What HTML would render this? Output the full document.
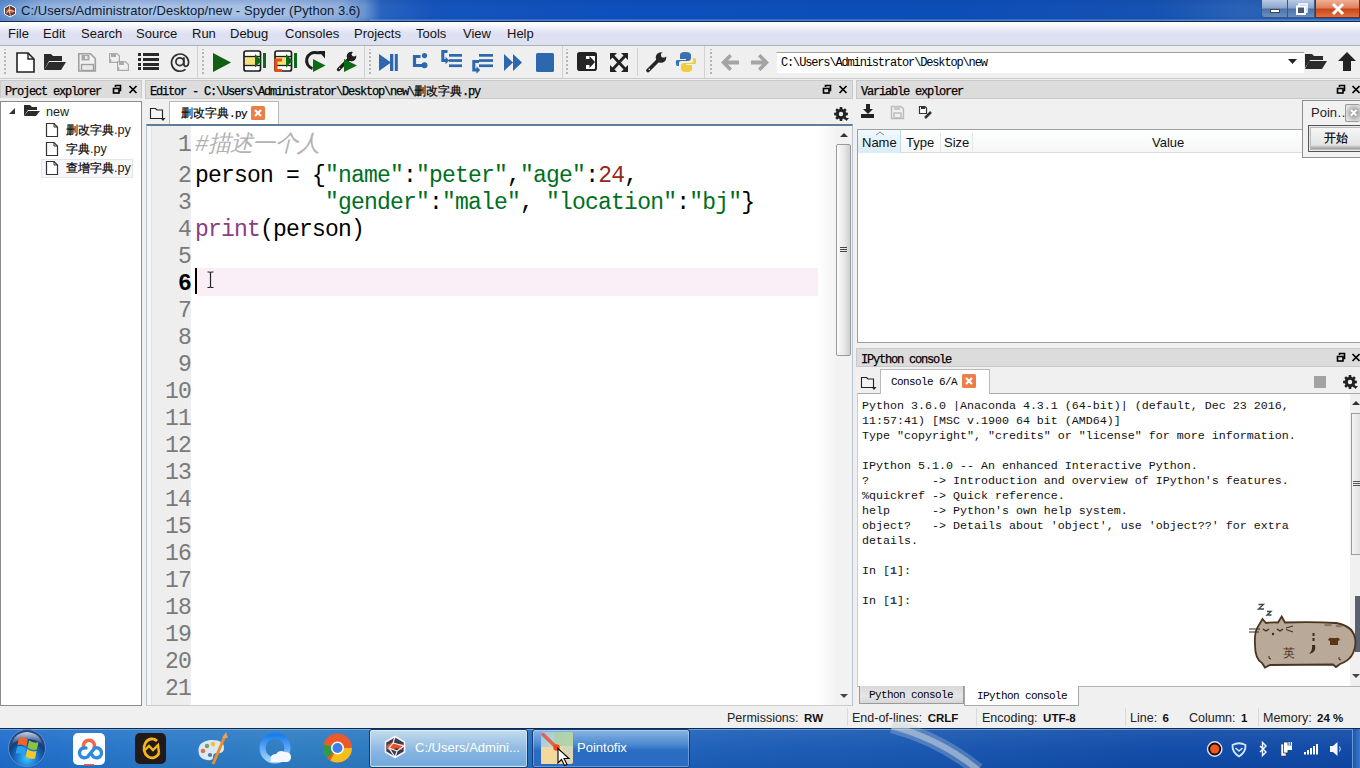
<!DOCTYPE html>
<html><head><meta charset="utf-8">
<style>
*{margin:0;padding:0;box-sizing:border-box}
html,body{width:1360px;height:768px;overflow:hidden;background:#f0f0f0;font-family:"Liberation Sans",sans-serif;position:relative}
.a{position:absolute}
#title{left:0;top:0;width:1360px;height:21px;background:linear-gradient(rgba(20,60,140,0.18),rgba(255,255,255,0) 30%,rgba(255,255,255,0) 70%,rgba(20,60,140,0.15)),linear-gradient(90deg,#5f8fd0 0%,#90b2de 3%,#a9c2e6 10%,#a6c0e6 20%,#90b0de 25%,#6a94d0 26.8%,#2a64c0 28%,#1454bc 32%,#0d4fbc 45%,#0c4eb8 70%,#1552b2 85%,#2a62b6 91%,#1e58b0 100%)}
#title .t{left:21px;top:3px;font-size:13px;color:#0e1a2e;white-space:nowrap;letter-spacing:0.05px}
#tline{left:0;top:21px;width:1360px;height:1px;background:#1a2a45}
#menu{left:0;top:22px;width:1360px;height:23px;background:linear-gradient(#ffffff 0%,#fafbfd 12%,#ebeaf8 32%,#dfe1f3 50%,#dde1ef 100%)}
#menu span{position:absolute;top:4px;font-size:13px;color:#141414}
#tb{left:0;top:45px;width:1360px;height:34px;background:#efefef;border-top:1px solid #adb1bc;border-bottom:1px solid #c9c9c9}
.grip{position:absolute;top:6px;width:2px;height:22px;background:repeating-linear-gradient(#b9b9b9 0 2px,transparent 2px 4px)}
.sep{position:absolute;top:2px;width:1px;height:30px;background:#d4d4d4;border-right:1px solid #fbfbfb}
.dockt{position:absolute;height:19px;background:#dcdcdc;border:1px solid #c9c9c9;font-family:"Liberation Mono",monospace;font-size:12px;letter-spacing:-1.2px;color:#000;-webkit-text-stroke:0.25px #000;padding:5px 0 0 4px;white-space:nowrap;line-height:13px}
.dockt .cj{font-size:12px;letter-spacing:0}
.mono{font-family:"Liberation Mono",monospace}
svg{position:absolute;overflow:visible}
.pe{font-size:12.6px;color:#1a1a1a;white-space:nowrap;line-height:15px}
.pe .cj{font-size:12px;color:#000;-webkit-text-stroke:0.2px #000}
.code{left:0;top:0}
.ln{position:absolute;left:147px;width:44px;text-align:right;font-family:"Liberation Mono",monospace;font-size:23px;letter-spacing:-0.8px;line-height:27px;color:#7a7a7a;padding-right:0px}
.ln.cur{color:#000;font-weight:bold}
.cl{position:absolute;left:195px;font-family:"Liberation Mono",monospace;font-size:23px;letter-spacing:-0.8px;line-height:27px;color:#000;white-space:pre}
.cm{color:#b2b2b2;font-style:italic}
.st{color:#006e1e}
.nu{color:#902a1c}
.kw{color:#8a3d82}
.vh{font-size:13px;color:#111}
.con{font-family:"Liberation Mono",monospace;font-size:11.67px;line-height:15px;color:#111}
.con b{color:#2a3a7a}
.bt{font-size:11px;letter-spacing:-0.6px;color:#000;line-height:13px}
.sb{top:711px;font-size:12.5px;color:#222;white-space:nowrap;line-height:15px}
.sb b{color:#111;font-size:11.5px;margin-left:2px}
.tk{top:740px;font-size:13px;color:#fff;white-space:nowrap}

</style></head><body>
<!-- Title bar -->
<div id="title" class="a">
 <svg style="left:3px;top:4px" width="14" height="14" viewBox="0 0 14 14"><path d="M7 1 L12.5 4 V10 L7 13 L1.5 10 V4 Z" fill="#5a3a3a" stroke="#f4f4f8" stroke-width="1"/><path d="M3 6 L7 4.5 L11 6.5 L10 9 L6 8.5 L3.5 9 Z" fill="#e05a2a"/><g stroke="#fff" stroke-width="0.7" fill="none"><path d="M7 1.5 L6 6 L3 9.5 M6 6 L11.5 7.5 M6 6 L7.5 12.5"/></g></svg>
 <div class="a" style="left:1261px;top:0;width:27px;height:18px;background:linear-gradient(#b9cbe6,#8aa6cc 45%,#4d73a8 55%,#6a90c0);border:1px solid #3a5580;border-top:none;border-radius:0 0 0 4px"></div>
 <div class="a" style="left:1288px;top:0;width:27px;height:18px;background:linear-gradient(#b9cbe6,#8aa6cc 45%,#4d73a8 55%,#6a90c0);border:1px solid #3a5580;border-top:none;border-left:none"></div>
 <div class="a" style="left:1315px;top:0;width:45px;height:18px;background:linear-gradient(#f0b090,#e08060 45%,#c84818 55%,#e07040);border:1px solid #6a3020;border-top:none"></div>
 <div class="a" style="left:1270px;top:9px;width:10px;height:4px;background:#fff;border:1px solid #445"></div>
 <svg style="left:1295px;top:3px" width="14" height="12"><rect x="4" y="1" width="8" height="8" fill="none" stroke="#fff" stroke-width="1.5"/><rect x="2" y="3.5" width="8" height="7.5" fill="#465a78" stroke="#fff" stroke-width="2"/></svg>
 <svg style="left:1331px;top:3px" width="14" height="12"><path d="M2 1 L12 11 M12 1 L2 11" stroke="#fff" stroke-width="3"/></svg>
 <div class="a t">C:/Users/Administrator/Desktop/new - Spyder (Python 3.6)</div>
</div>
<div class="a" style="left:370px;top:19px;width:990px;height:2px;background:linear-gradient(rgba(120,170,240,0.2),rgba(110,165,235,0.7))"></div>
<div id="tline" class="a"></div>
<div id="menu" class="a">
 <span style="left:8px">File</span><span style="left:43px">Edit</span><span style="left:81px">Search</span><span style="left:136px">Source</span><span style="left:192px">Run</span><span style="left:230px">Debug</span><span style="left:285px">Consoles</span><span style="left:354px">Projects</span><span style="left:416px">Tools</span><span style="left:463px">View</span><span style="left:507px">Help</span>
</div>
<div id="tb" class="a"></div>
<svg style="left:0;top:0" width="1360" height="80" viewBox="0 0 1360 80">
 <!-- grips -->
 <g fill="#bdbdbd">
  <rect x="4" y="49" width="2" height="26" fill="url(#gp)"/>
  <rect x="202" y="49" width="2" height="26" fill="url(#gp)"/>
  <rect x="369" y="49" width="2" height="26" fill="url(#gp)"/>
  <rect x="566" y="49" width="2" height="26" fill="url(#gp)"/>
  <rect x="710" y="49" width="2" height="26" fill="url(#gp)"/>
 </g>
 <defs><pattern id="gp" width="2" height="4" patternUnits="userSpaceOnUse"><rect width="2" height="2" fill="#b5b5b5"/></pattern></defs>
 <g fill="#d2d2d2"><rect x="197" y="46" width="1" height="32"/><rect x="364" y="46" width="1" height="32"/><rect x="562" y="46" width="1" height="32"/><rect x="637" y="48" width="1" height="28"/><rect x="704" y="46" width="1" height="32"/></g>
 <!-- new file -->
 <path d="M17 53 H28 L34 59 V72 H17 Z" fill="#fff" stroke="#222" stroke-width="1.6"/>
 <path d="M28 53 V59 H34" fill="none" stroke="#222" stroke-width="1.4"/>
 <!-- open folder -->
 <path d="M44 54 H51 L53 56 H62 V61 H49 L44 70 Z" fill="#2b2b2b"/>
 <path d="M49 62 H66 L61 70 H44 Z" fill="#2b2b2b"/>
 <!-- save (grey) -->
 <path d="M78.8 53.8 H90.5 L95.3 58.6 V71 H78.8 Z" fill="#f2f2f2" stroke="#a0a0a0" stroke-width="1.6"/>
 <rect x="81.5" y="55" width="8" height="5.5" fill="#a8a8a8"/><rect x="85" y="56" width="2.5" height="3" fill="#e8e8e8"/>
 <rect x="81.5" y="64.5" width="12" height="6" fill="#eaeaea" stroke="#a0a0a0" stroke-width="1.4"/>
 <!-- save all -->
 <g fill="#f0f0f0" stroke="#aaaaaa" stroke-width="1.2">
  <path d="M109.6 53.6 H117 L119.4 56 V62.4 H109.6 Z"/>
  <path d="M117.6 61.6 H125.5 L128.4 64.5 V70.4 H117.6 Z"/>
 </g>
 <g fill="#aaaaaa"><rect x="111" y="53.5" width="5" height="3.5"/><rect x="119" y="61.5" width="5" height="3.5"/><rect x="110" y="59" width="1.2" height="3"/><rect x="118" y="67" width="1.2" height="3"/></g>
 <!-- list -->
 <g fill="#2a2a2a"><rect x="138" y="53" width="3" height="3"/><rect x="143" y="53" width="16" height="3"/><rect x="138" y="58" width="3" height="3"/><rect x="143" y="58" width="16" height="3"/><rect x="138" y="63" width="3" height="3"/><rect x="143" y="63" width="16" height="3"/><rect x="138" y="67" width="3" height="3"/><rect x="143" y="67" width="16" height="3"/></g>
 <!-- @ -->
 <g fill="none" stroke="#2e2e2e" stroke-width="1.7"><path d="M185.5 69.3 A8.6 8.6 0 1 1 188.6 61.5 Q188.6 66.3 185.8 66.3 Q183.9 66.3 183.9 64 V57.3"/><circle cx="179.8" cy="61.7" r="3.9"/></g>
 <!-- run -->
 <path d="M213 53 L231 62.5 L213 72 Z" fill="#116011"/>
 <!-- run cell -->
 <rect x="244" y="51" width="16.5" height="20" rx="2" fill="#fff" stroke="#1e1e1e" stroke-width="1.7"/>
 <rect x="245" y="57" width="11" height="8" fill="#f5e27a"/>
 <line x1="244" y1="56.5" x2="260" y2="56.5" stroke="#1e1e1e" stroke-width="1.3"/><line x1="244" y1="65.5" x2="260" y2="65.5" stroke="#1e1e1e" stroke-width="1.3"/>
 <path d="M255 54 L261.5 60.8 L255 67.5 Z" fill="#0d6a14"/><rect x="263" y="53" width="3" height="15" fill="#0d6a14"/>
 <!-- run cell advance -->
 <rect x="275" y="51" width="16.5" height="20" rx="2" fill="#fff" stroke="#1e1e1e" stroke-width="1.7"/>
 <rect x="276" y="57" width="11" height="8" fill="#f5e27a"/>
 <line x1="275" y1="56.5" x2="291" y2="56.5" stroke="#1e1e1e" stroke-width="1.3"/><line x1="275" y1="65.5" x2="291" y2="65.5" stroke="#1e1e1e" stroke-width="1.3"/>
 <path d="M286 54 L292.5 60.8 L286 67.5 Z" fill="#0d6a14"/><rect x="294" y="53" width="3" height="15" fill="#0d6a14"/>
 <path d="M282 60 H276 V70.5 H282" fill="none" stroke="#f04a10" stroke-width="3"/>
 <!-- rerun -->
 <path d="M312.5 68.5 A7.8 7.8 0 0 1 317 52.8 H321" fill="none" stroke="#1e1e1e" stroke-width="3"/>
 <path d="M318.5 51 H325 V58.5 Z" fill="#1e1e1e"/>
 <path d="M313 59 L325.5 65.5 L313 72 Z" fill="#0d6a14"/>
 <!-- configure run -->
 <path d="M338.5 69.5 L349 59" stroke="#1e1e1e" stroke-width="3.4" stroke-linecap="round"/><circle cx="339.5" cy="68.5" r="0.7" fill="#ddd"/>
 <circle cx="351.5" cy="56.5" r="4.8" fill="#1e1e1e"/>
 <circle cx="354" cy="54.2" r="2.3" fill="#efefef"/><path d="M353 52 L356 49 L358.5 51.5 L355.5 54.5 Z" fill="#efefef"/>
 <path d="M344 59 L357 65.5 L344 72 Z" fill="#0d6a14"/>
 <!-- debug -->
 <path d="M379 54 L391 62.5 L379 71 Z" fill="#2d67ad"/><rect x="390" y="54" width="3.3" height="17" fill="#2d67ad"/><rect x="394.8" y="54" width="3" height="17" fill="#2d67ad"/>
 <!-- step -->
 <path d="M420.5 56.5 H414.5 V65.5 H422" fill="none" stroke="#2d67ad" stroke-width="3.2"/>
 <circle cx="424.5" cy="55.6" r="2.6" fill="#2d67ad"/><circle cx="424.5" cy="65.3" r="3" fill="#2d67ad"/>
 <!-- step into -->
 <path d="M447.5 51.5 H442.8 V60.5 H446" fill="none" stroke="#2d67ad" stroke-width="3"/><path d="M445.5 56.8 L449.3 60.5 L445.5 64.2 Z" fill="#2d67ad"/>
 <g fill="#2d67ad"><rect x="449" y="54" width="13" height="2.7"/><rect x="449" y="59.2" width="13" height="2.7"/><rect x="449" y="64.4" width="13" height="2.7"/></g>
 <!-- step return -->
 <g fill="#2d67ad"><rect x="479" y="54" width="14" height="2.7"/><rect x="479" y="59.2" width="14" height="2.7"/><rect x="479" y="64.4" width="14" height="2.7"/></g>
 <path d="M479 61.5 H473.8 V70 H477" fill="none" stroke="#2d67ad" stroke-width="3"/><path d="M476.5 66.3 L480.2 70 L476.5 73.7 Z" fill="#2d67ad"/>
 <!-- continue -->
 <path d="M504 54 L513 62.5 L504 71 Z M513 54 L522 62.5 L513 71 Z" fill="#2d67ad"/>
 <!-- stop -->
 <rect x="536" y="53" width="18" height="19" rx="1.5" fill="#2d67ad"/>
 <!-- maximize pane -->
 <rect x="578" y="53" width="18" height="17" rx="1.8" fill="#fff" stroke="#222" stroke-width="2"/>
 <rect x="578" y="53" width="18" height="3" fill="#222"/>
 <path d="M579 56 H586 V59 H589.5 V56 L595 62 L589.5 68 V65 H586 V69 H579 Z" fill="#262626"/>
 <!-- fullscreen -->
 <g stroke="#222" stroke-width="2.8"><line x1="613" y1="56" x2="625" y2="69"/><line x1="625" y1="56" x2="613" y2="69"/></g>
 <g fill="#222"><path d="M610 53 H617 L610 60 Z"/><path d="M628 53 H621 L628 60 Z"/><path d="M610 72 H617 L610 65 Z"/><path d="M628 72 H621 L628 65 Z"/></g>
 <!-- wrench -->
 <path d="M648 70.5 L658 60.5" stroke="#262626" stroke-width="3.8" stroke-linecap="round"/><circle cx="649.3" cy="69.3" r="0.8" fill="#eee"/>
 <circle cx="661" cy="57.5" r="5.3" fill="#262626"/>
 <circle cx="663.6" cy="54.9" r="2.6" fill="#eeeeee"/><path d="M662.5 52.5 L666 49 L669 52 L665.5 55.5 Z" fill="#eeeeee"/>
 <!-- python -->
 <path d="M686 52 C680 52 680 54 680 56 V59 H686 V60 H677 C675 60 676 66 677 66 H679 V63 C679 61 681 61 682 61 H688 C690 61 691 60 691 58 V55 C691 53 689 52 686 52 Z" fill="#3a72b0"/>
 <path d="M686 72 C692 72 692 70 692 68 V65 H686 V64 H695 C697 64 696 58 695 58 H693 V61 C693 63 691 63 690 63 H684 C682 63 681 64 681 66 V69 C681 71 683 72 686 72 Z" fill="#f3cc3b"/>
 <!-- back / forward -->
 <path d="M721 62.5 L729.5 54 L732 56.5 L728 60.5 H739 V64.5 H728 L732 68.5 L729.5 71 Z" fill="#a4a4a4"/>
 <path d="M769 62.5 L760.5 54 L758 56.5 L762 60.5 H751 V64.5 H762 L758 68.5 L760.5 71 Z" fill="#a4a4a4"/>
 <!-- open dir -->
 <path d="M1305 54 H1312 L1314 56 H1323 V60 H1310 L1305 68 Z" fill="#2b2b2b"/>
 <path d="M1309 61 H1327 L1322 69 H1305 Z" fill="#2b2b2b"/>
 <!-- up -->
 <path d="M1347 52 L1356 61 H1351 V71 H1343 V61 H1338 Z" fill="#222"/>
</svg>
<div class="a" style="left:776px;top:52px;width:528px;height:21px;background:#fff;border-top:1px solid #a0a0a0;border-left:1px solid #f0f0f0"></div>
<div class="a mono" style="left:781px;top:56px;font-size:12px;letter-spacing:-1.15px;color:#000;line-height:14px">C:\Users\Administrator\Desktop\new</div>
<svg style="left:1288px;top:59px" width="9" height="5"><path d="M0 0 H9 L4.5 5 Z" fill="#222"/></svg>

<!-- dock title bars -->
<div class="dockt" style="left:0;top:80px;width:142px">Project explorer</div>
<div class="dockt" style="left:145px;top:80px;width:708px">Editor - C:\Users\Administrator\Desktop\new\<span class="cj">删改字典</span>.py</div>
<div class="dockt" style="left:856px;top:80px;width:504px;border-right:none">Variable explorer</div>
<div class="dockt" style="left:856px;top:348px;width:504px;border-right:none">IPython console</div>

<svg style="left:0;top:0" width="1360" height="370">
 <g fill="none" stroke="#000" stroke-width="1.6">
  <path d="M115.5 87 V85.5 H120.5 V90.5 H119"/><rect x="113.5" y="88.5" width="5.5" height="4.5"/>
  <path d="M825.5 87 V85.5 H830.5 V90.5 H829"/><rect x="823.5" y="88.5" width="5.5" height="4.5"/>
  <path d="M1339.5 87 V85.5 H1344.5 V90.5 H1343"/><rect x="1337.5" y="88.5" width="5.5" height="4.5"/>
  <path d="M1339.5 355 V353.5 H1344.5 V358.5 H1343"/><rect x="1337.5" y="356.5" width="5.5" height="4.5"/>
 </g>
 <g stroke="#000" stroke-width="1.7">
  <path d="M129.5 86 L136.5 93 M136.5 86 L129.5 93"/>
  <path d="M839.5 86 L846.5 93 M846.5 86 L839.5 93"/>
  <path d="M1352.5 86 L1359.5 93 M1359.5 86 L1352.5 93"/>
  <path d="M1352.5 354 L1359.5 361 M1359.5 354 L1352.5 361"/>
 </g>
</svg>

<!-- ===== Project explorer ===== -->
<div class="a" style="left:0;top:98px;width:145px;height:607px;background:#f0f0f0"></div>
<div class="a" style="left:0;top:101px;width:142px;height:605px;background:#fff;border:1px solid #8c8c8c"></div>
<div class="a" style="left:41px;top:159px;width:92px;height:19px;border:1px solid #e4e4ee;background:#f7f7fb"></div>
<svg style="left:0;top:0" width="145" height="200">
 <path d="M9 114 L15 108 V114 Z" fill="#333"/>
 <path d="M24 105 H30 L32 107 H37 V110 H28 L24 116 Z" fill="#2b2b2b"/><path d="M28 111 H40 L36 116 H24 Z" fill="#2b2b2b"/>
 <g fill="#fff" stroke="#333" stroke-width="1.2">
  <path d="M46.5 123.5 H54 L57.5 127 V136.5 H46.5 Z"/><path d="M46.5 142.5 H54 L57.5 146 V155.5 H46.5 Z"/><path d="M46.5 161.5 H54 L57.5 165 V174.5 H46.5 Z"/>
 </g>
 <g fill="none" stroke="#333" stroke-width="1"><path d="M54 123.5 V127 H57.5"/><path d="M54 142.5 V146 H57.5"/><path d="M54 161.5 V165 H57.5"/></g>
</svg>
<div class="a pe" style="left:46px;top:105px">new</div>
<div class="a pe" style="left:66px;top:123px"><span class="cj">删改字典</span>.py</div>
<div class="a pe" style="left:66px;top:142px"><span class="cj">字典</span>.py</div>
<div class="a pe" style="left:66px;top:161px"><span class="cj">查增字典</span>.py</div>

<!-- ===== Editor ===== -->
<div class="a" style="left:146px;top:124px;width:707px;height:582px;background:#fff;border:1px solid #b8c4d0;border-bottom:1px solid #cdcdcd;border-top:2px solid #5f7c98"></div>
<div class="a" style="left:147px;top:126px;width:44px;height:579px;background:#eeeeee;border-left:4px solid #f4f6f8"></div><div class="a" style="left:151px;top:126px;width:1px;height:579px;background:#dfe3e8"></div>
<div class="a" style="left:197px;top:268px;width:621px;height:28px;background:#fbeff7"></div>
<div class="a" style="left:169px;top:101px;width:110px;height:23px;background:#fff;border:1px solid #b9b9b9;border-bottom:none"></div>
<div class="a" style="left:181px;top:106px;font-size:12px;line-height:14px;color:#000;white-space:nowrap"><span style="-webkit-text-stroke:0.2px #000">删改字典</span><span class="mono" style="font-size:11px;letter-spacing:-0.6px;-webkit-text-stroke:0.2px #000">.py</span></div>
<svg style="left:150px;top:107px" width="18" height="16"><path d="M0.5 1.5 H5.5 L7 3 H12.5 V11.5 H0.5 Z" fill="#f4f4f4" stroke="#222" stroke-width="1.1"/><path d="M10.5 11 H15.5 L13 14 Z" fill="#222"/></svg>
<svg style="left:251px;top:106px" width="14" height="14"><rect width="14" height="14" rx="1.5" fill="#ec7e47"/><path d="M4 4 L10 10 M10 4 L4 10" stroke="#fff" stroke-width="2.2"/></svg>
<svg style="left:834px;top:107px" width="18" height="18"><path fill-rule="evenodd" fill="#222" d="M12.0 5.5 L13.9 5.8 L13.9 8.2 L12.0 8.5 L11.6 9.5 L12.7 11.0 L11.0 12.7 L9.5 11.6 L8.5 12.0 L8.2 13.9 L5.8 13.9 L5.5 12.0 L4.5 11.6 L3.0 12.7 L1.3 11.0 L2.4 9.5 L2.0 8.5 L0.1 8.2 L0.1 5.8 L2.0 5.5 L2.4 4.5 L1.3 3.0 L3.0 1.3 L4.5 2.4 L5.5 2.0 L5.8 0.1 L8.2 0.1 L8.5 2.0 L9.5 2.4 L11.0 1.3 L12.7 3.0 L11.6 4.5 Z M9.2 7 A2.2 2.2 0 1 0 4.8 7 A2.2 2.2 0 1 0 9.2 7 Z"/><path d="M10 11 H15 L12.5 14 Z" fill="#222"/></svg>
<!-- scrollbar -->
<div class="a" style="left:818px;top:126px;width:18px;height:579px;background:linear-gradient(90deg,#ffffff,#f9f9f9 50%,#f3f3f3)"></div><div class="a" style="left:836px;top:126px;width:16px;height:579px;background:#f2f2f2"></div>
<div class="a" style="left:836px;top:144px;width:15px;height:212px;background:linear-gradient(90deg,#fbfbfb,#e8e8e8 55%,#cdcdcd);border:1px solid #9a9a9a;border-radius:2px"></div>
<svg style="left:839px;top:132px" width="10" height="6"><path d="M1 5 L5 1 L9 5 Z" fill="#333"/></svg>
<svg style="left:839px;top:693px" width="10" height="6"><path d="M1 1 L5 5 L9 1 Z" fill="#444"/></svg>
<svg style="left:840px;top:246px" width="8" height="8"><g stroke="#444" stroke-width="1"><line x1="0" y1="1.5" x2="7" y2="1.5"/><line x1="0" y1="3.5" x2="7" y2="3.5"/><line x1="0" y1="5.5" x2="7" y2="5.5"/></g></svg>
<!-- code -->
<div class="a code" id="code">
<div class="ln" style="top:132px">1</div><div class="cl" style="top:132px"><span class="cm">#描述一个人</span></div>
<div class="ln" style="top:163px">2</div><div class="cl" style="top:163px">person = {<span class="st">"name"</span>:<span class="st">"peter"</span>,<span class="st">"age"</span>:<span class="nu">24</span>,</div>
<div class="ln" style="top:190px">3</div><div class="cl" style="top:190px">          <span class="st">"gender"</span>:<span class="st">"male"</span>, <span class="st">"location"</span>:<span class="st">"bj"</span>}</div>
<div class="ln" style="top:217px">4</div><div class="cl" style="top:217px"><span class="kw">print</span>(person)</div>
<div class="ln" style="top:244px">5</div>
<div class="ln cur" style="top:271px">6</div>
<div class="ln" style="top:298px">7</div>
<div class="ln" style="top:325px">8</div>
<div class="ln" style="top:352px">9</div>
<div class="ln" style="top:379px">10</div>
<div class="ln" style="top:406px">11</div>
<div class="ln" style="top:433px">12</div>
<div class="ln" style="top:460px">13</div>
<div class="ln" style="top:487px">14</div>
<div class="ln" style="top:514px">15</div>
<div class="ln" style="top:541px">16</div>
<div class="ln" style="top:568px">17</div>
<div class="ln" style="top:595px">18</div>
<div class="ln" style="top:622px">19</div>
<div class="ln" style="top:649px">20</div>
<div class="ln" style="top:676px">21</div>
</div>
<div class="a" style="left:195px;top:268px;width:2px;height:26px;background:#000"></div>
<svg style="left:206px;top:271px" width="10" height="18"><path d="M1.5 1 H3.5 Q4.5 1 4.5 2.5 V15 Q4.5 16.5 3.5 16.5 H1.5 M7.5 1 H5.5 Q4.5 1 4.5 2.5 V15 Q4.5 16.5 5.5 16.5 H7.5" fill="none" stroke="#222" stroke-width="1.2"/></svg>

<!-- ===== Variable explorer ===== -->
<svg style="left:0;top:0" width="1360" height="130">
 <g fill="#222"><rect x="866" y="104" width="4" height="6"/><path d="M863 109 H873 L868 114 Z"/><rect x="861" y="114" width="13" height="4"/></g>
 <g fill="none" stroke="#b9b9b9" stroke-width="1.4"><path d="M891.5 106.5 H901 L903.5 109 V118.5 H891.5 Z"/><rect x="894" y="113" width="7" height="5"/></g><rect x="894" y="106" width="6" height="4" fill="#c8c8c8"/>
 <g><path d="M919.5 106.5 H925 L926.5 108 V113.5 H919.5 Z" fill="#fff" stroke="#333" stroke-width="1.2"/><rect x="921" y="106" width="4" height="3" fill="#333"/><path d="M925 118 L931 112" stroke="#333" stroke-width="2.5"/></g>
</svg>
<div class="a" style="left:857px;top:129px;width:503px;height:214px;background:#fff;border:1px solid #a0a0a0;border-right:none"></div>
<div class="a" style="left:858px;top:130px;width:502px;height:23px;background:linear-gradient(#ffffff,#f4f6f8);border-bottom:1px solid #dcdcdc"></div>
<div class="a" style="left:858px;top:130px;width:43px;height:23px;background:linear-gradient(#f2f8fd,#d8ecf9);border-right:1px solid #c2d8e8"></div>
<div class="a" style="left:940px;top:133px;width:1px;height:19px;background:#e6e6e6"></div>
<div class="a" style="left:972px;top:133px;width:1px;height:19px;background:#e6e6e6"></div>
<svg style="left:875px;top:131px" width="10" height="5"><path d="M1 4 L5 1 L9 4" fill="none" stroke="#7a8ca0" stroke-width="1"/></svg>
<div class="a vh" style="left:862px;top:135px">Name</div>
<div class="a vh" style="left:906px;top:135px">Type</div>
<div class="a vh" style="left:944px;top:135px">Size</div>
<div class="a vh" style="left:1152px;top:135px">Value</div>

<!-- Pointofix popup -->
<div class="a" style="left:1302px;top:100px;width:58px;height:58px;background:#f2f2f2;border:1px solid #8e8e8e;border-right:none"></div>
<div class="a" style="left:1311px;top:105px;font-size:13px;line-height:15px;color:#222;white-space:nowrap">Poin…</div>
<div class="a" style="left:1345px;top:104px;width:15px;height:18px;background:radial-gradient(circle at 60% 50%,#8a8a8a 0,#b8b8b8 40%,#e4e4e4 80%);border:1px solid #9a9a9a;border-radius:2px;border-right:none"></div>
<svg style="left:1350px;top:109px" width="8" height="8"><path d="M1 1 L6.5 6.5 M6.5 1 L1 6.5" stroke="#fff" stroke-width="1.8"/></svg>
<div class="a" style="left:1308px;top:125px;width:52px;height:27px;border:1px solid #555;border-right:none;background:#e9e9e9"></div>
<div class="a" style="left:1310px;top:127px;width:50px;height:23px;background:linear-gradient(#f6f6f6,#e4e4e4 80%,#9a9a9a);border:1px solid #bbb;border-right:none"></div>
<div class="a" style="left:1324px;top:131px;font-size:12px;line-height:14px;color:#000;-webkit-text-stroke:0.2px #000">开始</div>

<!-- ===== IPython console ===== -->
<div class="a" style="left:857px;top:393px;width:503px;height:293px;background:#fff;border-top:1px solid #a9a9a9;border-left:1px solid #c6cdd6"></div>
<div class="a" style="left:880px;top:369px;width:110px;height:25px;background:#fff;border:1px solid #b9b9b9;border-bottom:none"></div>
<div class="a mono" style="left:891px;top:376px;font-size:11px;letter-spacing:-0.6px;color:#000;line-height:13px">Console 6/A</div>
<svg style="left:861px;top:376px" width="18" height="16"><path d="M0.5 1.5 H5.5 L7 3 H12.5 V11.5 H0.5 Z" fill="#f4f4f4" stroke="#222" stroke-width="1.1"/><path d="M10.5 11 H15.5 L13 14 Z" fill="#222"/></svg>
<svg style="left:962px;top:374px" width="14" height="14"><rect width="14" height="14" rx="1.5" fill="#ec7e47"/><path d="M4 4 L10 10 M10 4 L4 10" stroke="#fff" stroke-width="2.2"/></svg>
<div class="a" style="left:1314px;top:376px;width:12px;height:12px;background:#a3a3a3"></div>
<svg style="left:1343px;top:375px" width="18" height="18"><path fill-rule="evenodd" fill="#222" d="M12.0 5.5 L13.9 5.8 L13.9 8.2 L12.0 8.5 L11.6 9.5 L12.7 11.0 L11.0 12.7 L9.5 11.6 L8.5 12.0 L8.2 13.9 L5.8 13.9 L5.5 12.0 L4.5 11.6 L3.0 12.7 L1.3 11.0 L2.4 9.5 L2.0 8.5 L0.1 8.2 L0.1 5.8 L2.0 5.5 L2.4 4.5 L1.3 3.0 L3.0 1.3 L4.5 2.4 L5.5 2.0 L5.8 0.1 L8.2 0.1 L8.5 2.0 L9.5 2.4 L11.0 1.3 L12.7 3.0 L11.6 4.5 Z M9.2 7 A2.2 2.2 0 1 0 4.8 7 A2.2 2.2 0 1 0 9.2 7 Z"/><path d="M10 11 H15 L12.5 14 Z" fill="#222"/></svg>
<div class="a" style="left:1350px;top:394px;width:10px;height:292px;background:#f0f0f0"></div>
<div class="a" style="left:1351px;top:413px;width:9px;height:142px;background:linear-gradient(90deg,#f4f4f4,#e2e2e2);border:1px solid #9c9c9c;border-right:none"></div>
<svg style="left:1352px;top:400px" width="8" height="6"><path d="M0 5 L4 1 L8 5 Z" fill="#333"/></svg>
<svg style="left:1352px;top:673px" width="8" height="6"><path d="M0 1 L4 5 L8 1 Z" fill="#444"/></svg>
<div class="a" style="left:1355px;top:596px;width:5px;height:56px;background:#5a6070"></div>
<svg style="left:1353px;top:480px" width="7" height="8"><g stroke="#555" stroke-width="1"><line x1="0" y1="1.5" x2="7" y2="1.5"/><line x1="0" y1="3.5" x2="7" y2="3.5"/><line x1="0" y1="5.5" x2="7" y2="5.5"/></g></svg>
<pre class="a con" style="left:862px;top:399px">Python 3.6.0 |Anaconda 4.3.1 (64-bit)| (default, Dec 23 2016,
11:57:41) [MSC v.1900 64 bit (AMD64)]
Type "copyright", "credits" or "license" for more information.

IPython 5.1.0 -- An enhanced Interactive Python.
?         -> Introduction and overview of IPython's features.
%quickref -> Quick reference.
help      -> Python's own help system.
object?   -> Details about 'object', use 'object??' for extra
details.

In [<b>1</b>]:

In [<b>1</b>]: </pre>
<svg style="left:1240px;top:595px" width="120" height="80">
 <path d="M15 50 Q14 36 19 30 L22.5 24 L26 28 Q33 27 38 27.5 L41.7 21.5 L45 27.5 Q72 26.5 96 28 Q115 31 115.5 47 Q115 64 100 69 L96 72 L93 69.5 L30 70 L25 72.5 L22 68 Q15 64 15 50 Z" fill="#b9a998" stroke="#4a3420" stroke-width="1.8"/>
 <g stroke="#3a2a1a" stroke-width="1" fill="none"><path d="M9 34 H20 M9 37 H19"/><path d="M46 33 L53 31 M46 34.5 L53 37"/><path d="M23 34 L26 36 L29 34" stroke-width="1.3"/><path d="M37 34 L40 36 L43 34" stroke-width="1.3"/><path d="M29 61 Q28 64 31 64" /><path d="M99 62 Q98 65 101 65"/></g>
 <g fill="#3a2a1a"><circle cx="33" cy="39" r="1.2"/><rect x="72.5" y="38" width="2" height="3"/><rect x="72.5" y="43" width="2" height="3"/><path d="M88 45 Q89 42 92 43 H96 Q99 42 100 45 L98 46 V50 H90 V46 Z" fill="#5a3518"/><path d="M75 50 Q77 57 69 59 Q73 55 72 50 Z"/><ellipse cx="88" cy="30" rx="4" ry="1.3" fill="#8a7a6a"/><ellipse cx="99" cy="31" rx="3.5" ry="1.3" fill="#8a7a6a"/></g>
 <text x="43" y="62" font-size="12" fill="#4a3520">英</text>
 <g fill="none" stroke="#3a4a40" stroke-width="1.3"><path d="M18.5 9.5 H23.5 L18.5 14 H24"/><path d="M27 16.5 H31 L27 20 H31.5"/></g>
</svg>
<!-- bottom tabs -->
<div class="a" style="left:857px;top:686px;width:503px;height:1px;background:#b4b4b4"></div>
<div class="a" style="left:859px;top:686px;width:105px;height:18px;background:linear-gradient(#d8d8d8,#e6e6e6 60%,#d6d6d6);border:1px solid #9a9a9a;border-top:none"></div>
<div class="a" style="left:964px;top:686px;width:115px;height:20px;background:#fff;border:1px solid #a8a8a8;border-top:none"></div>
<div class="a mono bt" style="left:869px;top:689px">Python console</div>
<div class="a mono bt" style="left:977px;top:690px">IPython console</div>

<!-- ===== Status bar ===== -->
<div class="a" style="left:0;top:706px;width:1360px;height:22px;background:#f0f0f0"></div>
<div class="a sb" style="left:727px">Permissions: <b>RW</b></div>
<div class="a" style="left:847px;top:708px;width:1px;height:18px;background:#dadada"></div>
<div class="a sb" style="left:852px">End-of-lines: <b>CRLF</b></div>
<div class="a" style="left:976px;top:708px;width:1px;height:18px;background:#dadada"></div>
<div class="a sb" style="left:982px">Encoding: <b>UTF-8</b></div>
<div class="a" style="left:1125px;top:708px;width:1px;height:18px;background:#dadada"></div>
<div class="a sb" style="left:1130px">Line: <b>6</b></div>
<div class="a sb" style="left:1189px">Column: <b>1</b></div>
<div class="a" style="left:1258px;top:708px;width:1px;height:18px;background:#dadada"></div>
<div class="a sb" style="left:1263px">Memory: <b>24 %</b></div>

<!-- ===== Taskbar ===== -->
<div class="a" id="task" style="left:0;top:728px;width:1360px;height:40px;background:linear-gradient(90deg,#1d6ccc 0%,#2a78c6 12%,#2d7cc2 22%,#2a76c0 30%,#1f66bc 45%,#1a5cb6 55%,#1654b0 70%,#0f4aa8 85%,#0e48a6 100%);border-top:1px solid #0e2a50"></div>
<div class="a" style="left:0;top:729px;width:1360px;height:1px;background:rgba(170,205,240,0.55)"></div>
<div class="a" style="left:0;top:730px;width:1360px;height:38px;background:linear-gradient(rgba(255,255,255,0.08),rgba(255,255,255,0.02) 50%,rgba(0,0,0,0.04))"></div>
<svg style="left:0;top:728px" width="1360" height="40">
 <defs>
  <radialGradient id="orb" cx="50%" cy="45%" r="55%"><stop offset="0" stop-color="#4aa0e0"/><stop offset="0.7" stop-color="#1c5fa8"/><stop offset="1" stop-color="#2a5a90"/></radialGradient>
  <linearGradient id="orbg" x1="0" y1="0" x2="0" y2="1"><stop offset="0" stop-color="#fff" stop-opacity="0.55"/><stop offset="1" stop-color="#fff" stop-opacity="0.05"/></linearGradient>
  <linearGradient id="cld" x1="0" y1="0" x2="0" y2="1"><stop offset="0" stop-color="#1a7ef0"/><stop offset="1" stop-color="#9fd4ff"/></linearGradient>
 </defs>
 <path d="M892 -2 Q942 12 978 42" stroke="#c4cdd6" stroke-opacity="0.3" stroke-width="14" fill="none"/><path d="M892 -2 Q942 12 978 42" stroke="#d6dde4" stroke-opacity="0.5" stroke-width="6" fill="none"/>
 <!-- start orb -->
 <defs>
  <radialGradient id="orb2" cx="50%" cy="78%" r="60%"><stop offset="0" stop-color="#38c8ff"/><stop offset="0.45" stop-color="#1a78d0"/><stop offset="0.85" stop-color="#12407e"/><stop offset="1" stop-color="#284a80"/></radialGradient>
  <linearGradient id="orbt" x1="0" y1="0" x2="0" y2="1"><stop offset="0" stop-color="#e8f0fa" stop-opacity="0.85"/><stop offset="1" stop-color="#a8c0e0" stop-opacity="0.1"/></linearGradient>
 </defs>
 <circle cx="27" cy="20" r="18.5" fill="url(#orb2)" stroke="#5a8ccc" stroke-width="1"/>
 <path d="M12 16 Q14 5 27 4 Q40 5 42 16 Q35 11 27 11 Q19 11 12 16 Z" fill="url(#orbt)"/>
 <g transform="rotate(12 27 20)">
  <path d="M17 11.5 Q21.5 9 26 11.5 V19 Q21.5 16.5 17 19 Z" fill="#f4642a"/>
  <path d="M27.5 12 Q32 14.5 37 12 V19.5 Q32 22 27.5 19.5 Z" fill="#8cc43c"/>
  <path d="M17 20.5 Q21.5 18 26 20.5 V28 Q21.5 25.5 17 28 Z" fill="#2aa0ec"/>
  <path d="M27.5 21 Q32 23.5 37 21 V28.5 Q32 31 27.5 28.5 Z" fill="#f8c82a"/>
 </g>
 <!-- baidu -->
 <rect x="73" y="5" width="32" height="32" rx="5" fill="#fbfdff"/>
 <g fill="none" stroke-width="3.4" stroke-linecap="round"><path d="M84 20 A5.5 5.5 0 1 1 94 20" stroke="#ef6a4a"/><path d="M86 20 A5 5 0 1 0 89 27 L95 20 A5 5 0 1 1 92 27" stroke="#2c8ae0"/></g>
 <rect x="84" y="36" width="10" height="1.5" fill="#ef5a40"/>
 <!-- game -->
 <rect x="135" y="5" width="31" height="31" rx="5" fill="#221a18"/>
 <path d="M157 13 A8 9.5 0 1 0 159 25" fill="none" stroke="#f6b51c" stroke-width="2.8"/>
 <path d="M145 22 L149 18 L153 22 L158 17 L159 25" fill="none" stroke="#f6b51c" stroke-width="2.4"/>
 <!-- paint -->
 <path d="M199 26 Q196 14 210 12 Q224 11 224 20 Q224 26 217 25 Q213 25 213 29 Q213 33 207 32 Q200 31 199 26 Z" fill="#dce8f4"/>
 <circle cx="203" cy="23" r="2.3" fill="#e2704a"/><circle cx="207" cy="18" r="2.2" fill="#7aa060"/><circle cx="213" cy="16" r="2.3" fill="#f2c030"/><circle cx="210" cy="27" r="2.1" fill="#4a7aa0"/>
 <path d="M213 36 L225 8" stroke="#e8902a" stroke-width="3"/><path d="M222 10 L226 4 L228 10 Z" fill="#e8a060"/>
 <!-- cloud -->
 <circle cx="275" cy="20" r="12.5" fill="none" stroke="url(#cld)" stroke-width="6"/>
 <path d="M271 34 Q269 26 276 26 Q279 21 285 24 Q291 24 291 29 Q291 34 286 34 Z" fill="#f4f8ff"/>
 <!-- chrome -->
 <circle cx="337.5" cy="20" r="14.5" fill="#ec5a2c"/>
 <path d="M337.5 20 L350 27.3 A14.5 14.5 0 0 1 324.9 27.3 Z" fill="#f2bf1c" transform="rotate(-30 337.5 20)"/>
 <path d="M337.5 20 L324.9 27.3 A14.5 14.5 0 0 1 324.9 12.7 Z" fill="#2f9a4a" transform="rotate(-15 337.5 20)"/>
 <circle cx="337.5" cy="20" r="6.5" fill="#fff"/><circle cx="337.5" cy="20" r="5" fill="#3f7fe8"/>
</svg>
<!-- task buttons -->
<div class="a" style="left:369px;top:729px;width:159px;height:39px;border-radius:3px;background:linear-gradient(#c4dcee,#a6c8e6 30%,#86b4e0 60%,#74a8dc 95%,#a8e0f8);border:1px solid #1a3a66;box-shadow:inset 0 0 0 1px rgba(255,255,255,0.45)"></div>
<div class="a" style="left:532px;top:729px;width:158px;height:39px;border-radius:3px;background:linear-gradient(#8ab4e4,#4a88d0 40%,#2a6cc0 55%,#2a6cc4);border:1px solid #143e78;box-shadow:inset 0 0 0 1px rgba(255,255,255,0.3)"></div>
<div class="a tk" style="left:415px">C:/Users/Admini...</div>
<div class="a tk" style="left:577px">Pointofix</div>
<svg style="left:383px;top:735px" width="24" height="24">
 <path d="M12 1.5 L21.5 7 V17 L12 22.5 L2.5 17 V7 Z" fill="#3e3850" stroke="#f4f8ff" stroke-width="1.6"/>
 <path d="M4 10 L10 7 L14 10 L20 9 L19 15 L13 13 L8 16 L4 14 Z" fill="#e8501e"/>
 <g stroke="#f4f8ff" stroke-width="1.2" fill="none"><path d="M12 2 L10 8 L6 13 L12 22"/><path d="M10 8 L21 11 L14 16 L12 22"/><path d="M6 13 L14 16"/></g>
</svg>
<svg style="left:540px;top:731px" width="36" height="36">
 <defs><linearGradient id="pfx" x1="0" y1="0" x2="1" y2="1"><stop offset="0" stop-color="#9cc4ec"/><stop offset="0.5" stop-color="#c8dcc0"/><stop offset="1" stop-color="#e8d0b0"/></linearGradient></defs>
 <rect x="1" y="1" width="32" height="32" rx="2" fill="url(#pfx)"/>
 <rect x="14" y="1" width="19" height="14" fill="#a8d0a0" opacity="0.7"/><rect x="1" y="16" width="22" height="17" fill="#f8d898" opacity="0.9"/>
 <path d="M3 3.5 L15 15" stroke="#e05a4a" stroke-width="3.5" stroke-linecap="round" opacity="0.9"/><circle cx="16.5" cy="16.5" r="3.2" fill="#f04818"/>
 <path d="M18 17.5 V32 L21.5 28.5 L24.5 34.5 L27 33.5 L24 27.5 H29 Z" fill="#fff" stroke="#000" stroke-width="1.1"/>
</svg>
<!-- tray -->
<svg style="left:0;top:0" width="1360" height="768">
 <circle cx="1214.7" cy="749" r="7.2" fill="#1a1010" stroke="#d8e0f0" stroke-width="1.4"/><circle cx="1214.7" cy="749" r="4.6" fill="#f0561e"/>
 <path d="M1232.5 745 Q1239 741.5 1245.5 745 Q1246 752 1239 756.5 Q1232 752 1232.5 745 Z" fill="none" stroke="#cfe6ff" stroke-width="1.8"/><path d="M1235.5 748 L1239 751 L1242.5 748" fill="none" stroke="#cfe6ff" stroke-width="1.6"/>
 <path d="M1260 746 L1266 752 L1262.5 755.5 V742.5 L1266 746 L1260 752" fill="none" stroke="#f4f8ff" stroke-width="1.4"/>
 <path d="M1281 744 H1286 V756 H1281 Z" fill="#fff" stroke="#444" stroke-width="0.6"/><path d="M1283.5 742 H1288 V753 H1283.5 Z" fill="#fff" stroke="#333" stroke-width="0.8"/><path d="M1287 745.5 H1292 V750 H1287 Z" fill="#fff"/><rect x="1288.5" y="742" width="1.2" height="3.5" fill="#fff"/><rect x="1290.8" y="742" width="1.2" height="3.5" fill="#fff"/>
 <g fill="#fff"><rect x="1304" y="752" width="2" height="2.5"/><rect x="1307" y="750" width="2" height="4.5"/><rect x="1310" y="748" width="2" height="6.5"/><rect x="1313" y="746" width="2" height="8.5"/><rect x="1316" y="744" width="2" height="10.5"/></g>
 <path d="M1330 746 H1333 L1337.5 742 V756 L1333 752 H1330 Z" fill="#f4f8ff"/><path d="M1339.5 746.5 Q1341 749 1339.5 751.5" fill="none" stroke="#cfe0f4" stroke-width="1"/>
</svg>
<div class="a" style="left:1352px;top:729px;width:8px;height:39px;background:linear-gradient(90deg,#1c56a8,#3a78c8);border-left:1px solid #6a9ad8"></div>
</body></html>
